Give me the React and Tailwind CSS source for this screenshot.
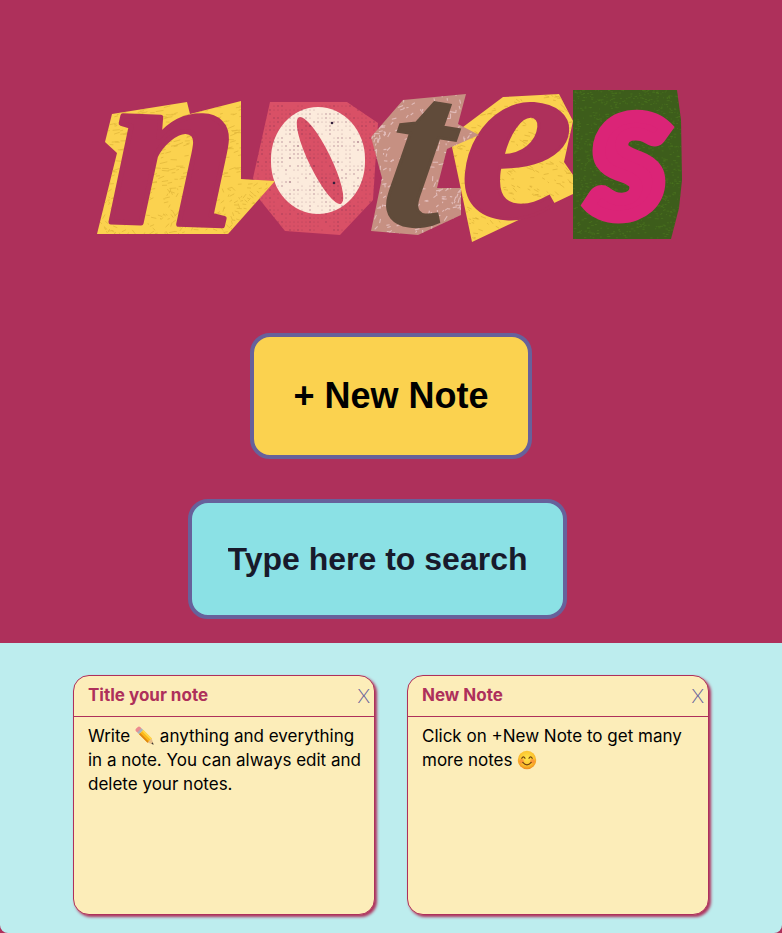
import React from "react";

// Small repeatable generator, so the paper grain is the same on each render.
function makeRandom(seed) {
  let s = seed;
  return () => {
    s = (s * 16807) % 2147483647;
    return s / 2147483647;
  };
}

function strokes({ seed, count, x, y, w, h, len, angle, spread }) {
  const r = makeRandom(seed);
  let d = "";
  for (let i = 0; i < count; i++) {
    const px = x + r() * w;
    const py = y + r() * h;
    const a = ((angle + (r() - 0.5) * spread) * Math.PI) / 180;
    const l = len * (0.4 + r());
    d += `M${px.toFixed(1)} ${py.toFixed(1)}l${(Math.cos(a) * l).toFixed(1)} ${(Math.sin(a) * l).toFixed(1)}`;
  }
  return d;
}

const grainN = strokes({ seed: 11, count: 330, x: 95, y: 100, w: 180, h: 90, len: 6, angle: -8, spread: 30 });
const grainN2 = strokes({ seed: 17, count: 260, x: 95, y: 185, w: 180, h: 50, len: 4, angle: 0, spread: 150 });
const grainT = strokes({ seed: 23, count: 330, x: 370, y: 94, w: 110, h: 142, len: 4, angle: -50, spread: 120 });
const grainE = strokes({ seed: 31, count: 380, x: 450, y: 94, w: 125, h: 148, len: 4, angle: 20, spread: 70 });
const grainS = strokes({ seed: 43, count: 1100, x: 573, y: 90, w: 110, h: 150, len: 2, angle: 0, spread: 4 });

const halftone = (() => {
  const r = makeRandom(59);
  const dots = [];
  for (let y = 106; y < 234; y += 4) {
    for (let x = 258; x < 376; x += 4) {
      const v = r();
      if (v > 0.3) dots.push([x, y, v > 0.985 ? 1.1 : v > 0.75 ? 0.8 : 0.5]);
    }
  }
  return dots;
})();

const SHAPES = {
  n: "97,234 117,153 105,142 112,114 187,102 190,114 241,101 241,179 275,181 228,234",
  o: "270,102 347,102 378,123 373,200 340,235 285,231 260,200 253,178",
  t: "403,100 466,94 458,124 479,135 447,149 437,188 461,188 461,215 418,235 371,231 382,178 371,137",
  e: "503,97 559,94 573,121 564,162 573,175 573,194 472,242 452,147 463,127",
  s: "573,90 677,90 681,120 682,180 679,208 671,239 573,239",
};

function Logo() {
  return (
    <svg role="img" aria-label="notes" viewBox="91 80 600 170" className="w-[600px] max-w-full overflow-visible">
      <defs>
        {Object.entries(SHAPES).map(([k, pts]) => (
          <clipPath key={k} id={`cut-${k}`}>
            <polygon points={pts} />
          </clipPath>
        ))}
      </defs>

      <polygon points={SHAPES.o} fill="#d95067" />
      <rect x="271" y="107" width="94" height="107" rx="47" ry="52" fill="#fcecdc" />
      <ellipse cx="320" cy="160.5" rx="11" ry="48" transform="rotate(-26 320 160.5)" fill="#d95067" />
      <g clipPath="url(#cut-o)" fill="#6b2a4a" opacity="0.45">
        {halftone.map(([x, y, r], i) => (
          <circle key={i} cx={x} cy={y} r={r} />
        ))}
      </g>
      <g fill="#33203c">
        <circle cx="332" cy="123" r="1.3" />
        <circle cx="334" cy="183" r="1.3" />
      </g>

      <polygon points={SHAPES.n} fill="#fbd24f" />
      <g clipPath="url(#cut-n)" stroke="#d9af35" strokeWidth="0.8" fill="none" opacity="0.75">
        <path d={grainN} />
        <path d={grainN2} />
      </g>
      <text
        x="108"
        y="224"
        fontSize="232"
        transform="rotate(2 170 170)"
        stroke="#ae305b"
        strokeWidth="5"
        strokeLinejoin="round"
        className="font-['Liberation_Serif'] font-bold italic"
        fill="#ae305b"
      >
        n
      </text>

      <polygon points={SHAPES.e} fill="#fbd24f" />
      <path clipPath="url(#cut-e)" d={grainE} stroke="#d9af35" strokeWidth="0.8" fill="none" opacity="0.8" />
      <text
        x="462"
        y="217"
        fontSize="244"
        transform="rotate(5 515 160)"
        stroke="#ae305b"
        strokeWidth="3"
        className="font-['Liberation_Serif'] font-bold italic"
        fill="#ae305b"
      >
        e
      </text>

      <polygon points={SHAPES.t} fill="#c69082" />
      <path clipPath="url(#cut-t)" d={grainT} stroke="#e6c3c3" strokeWidth="1.1" fill="none" opacity="0.85" />
      <text
        x="387"
        y="225"
        fontSize="220"
        transform="rotate(9 420 163)"
        stroke="#604b3a"
        strokeWidth="3"
        className="font-['Liberation_Serif'] font-bold italic"
        fill="#604b3a"
      >
        t
      </text>

      <polygon points={SHAPES.s} fill="#3d5d1b" />
      <path clipPath="url(#cut-s)" d={grainS} stroke="#4f7a20" strokeWidth="0.8" fill="none" opacity="0.7" />
      <text
        x="591"
        y="215"
        fontSize="188"
        stroke="#db2477"
        strokeWidth="13"
        className="font-[Lato] font-black italic"
        fill="#db2477"
      >
        s
      </text>
    </svg>
  );
}

function Pencil() {
  return (
    <svg viewBox="0 0 20 20" className="inline-block h-5 w-5 align-[-4px]" aria-hidden="true">
      <g transform="rotate(45 10 10)">
        <rect x="-1.5" y="7" width="4.5" height="6" rx="2" fill="#ec8b8f" />
        <rect x="2" y="7" width="2.6" height="6" fill="#a9b4bb" />
        <rect x="4.6" y="7" width="12" height="6" fill="#fbb818" />
        <rect x="4.6" y="7" width="12" height="1.7" fill="#ffd84a" />
        <rect x="4.6" y="11.3" width="12" height="1.7" fill="#dd8512" />
        <polygon points="16.6,7 22,10 16.6,13" fill="#e9c08c" />
        <polygon points="20,8.9 22.2,10 20,11.1" fill="#3c3733" />
      </g>
    </svg>
  );
}

function Smile() {
  return (
    <svg viewBox="0 0 20 20" className="inline-block h-5 w-5 align-[-4px]" aria-hidden="true">
      <defs>
        <radialGradient id="face" cx="50%" cy="40%" r="60%">
          <stop offset="0" stopColor="#ffe54c" />
          <stop offset="0.65" stopColor="#fdc52f" />
          <stop offset="1" stopColor="#ee8c1c" />
        </radialGradient>
      </defs>
      <circle cx="10" cy="10" r="9.2" fill="url(#face)" />
      <circle cx="4.6" cy="11.3" r="2.3" fill="#fb7a3c" opacity="0.6" />
      <circle cx="15.4" cy="11.3" r="2.3" fill="#fb7a3c" opacity="0.6" />
      <g fill="none" stroke="#70400f" strokeWidth="1.2" strokeLinecap="round">
        <path d="M4.8 8.3Q6.4 5.4 8 8.3M12 8.3Q13.6 5.4 15.2 8.3" />
        <path d="M5.8 12.4Q10 17.2 14.2 12.4" />
      </g>
    </svg>
  );
}

function Note({ title, children }) {
  return (
    <article className="h-60 w-[302px] rounded-2xl border border-[#ae305b] bg-[#fcedb9] shadow-[2px_2px_3px_#ae305b]">
      <header className="flex h-[41px] items-center justify-between border-b border-[#ae305b] pr-1 pb-0.5 pl-[14px]">
        <h2 className="text-[17px] leading-6 font-bold text-[#ae305b]">{title}</h2>
        <button type="button" aria-label={`X ${title}`} className="cursor-pointer font-[Lato,sans-serif] text-xl leading-6 font-light text-[#67619b]">
          X
        </button>
      </header>
      <p className="pt-[7px] pr-3 pl-[14px] text-[17px] leading-6 text-black">{children}</p>
    </article>
  );
}

export default function App() {
  return (
    <div className="flex min-h-screen flex-col bg-[#ae305b] font-[Inter,sans-serif]">
      <header className="flex flex-col items-center px-4 pt-20 pb-6">
        <h1>
          <Logo />
        </h1>
        <button
          type="button"
          className="mt-[83px] h-[126px] cursor-pointer rounded-[20px] border-4 border-[#67619b] bg-[#fbd24f] px-[39px] font-['Liberation_Sans',sans-serif] text-4xl font-bold text-black"
        >
          + New Note
        </button>
        <input
          type="text"
          aria-label="Type here to search"
          placeholder="Type here to search"
          className="mt-10 mr-7 h-[120px] w-[379px] max-w-full rounded-[20px] border-4 border-[#67619b] bg-[#8be1e5] px-9 font-['Liberation_Sans',sans-serif] text-[32px] font-bold text-[#181a2b] placeholder:text-[#181a2b] placeholder:opacity-100"
        />
      </header>
      <main className="flex flex-1 flex-wrap content-start justify-center gap-8 rounded-b-lg bg-[#bdedee] px-8 pt-8 pb-4">
        <Note title="Title your note">
          Write <Pencil /> anything and everything in a note. You can always edit and delete your notes.
        </Note>
        <Note title="New Note">
          Click on +New Note to get many more notes <Smile />
        </Note>
      </main>
    </div>
  );
}
